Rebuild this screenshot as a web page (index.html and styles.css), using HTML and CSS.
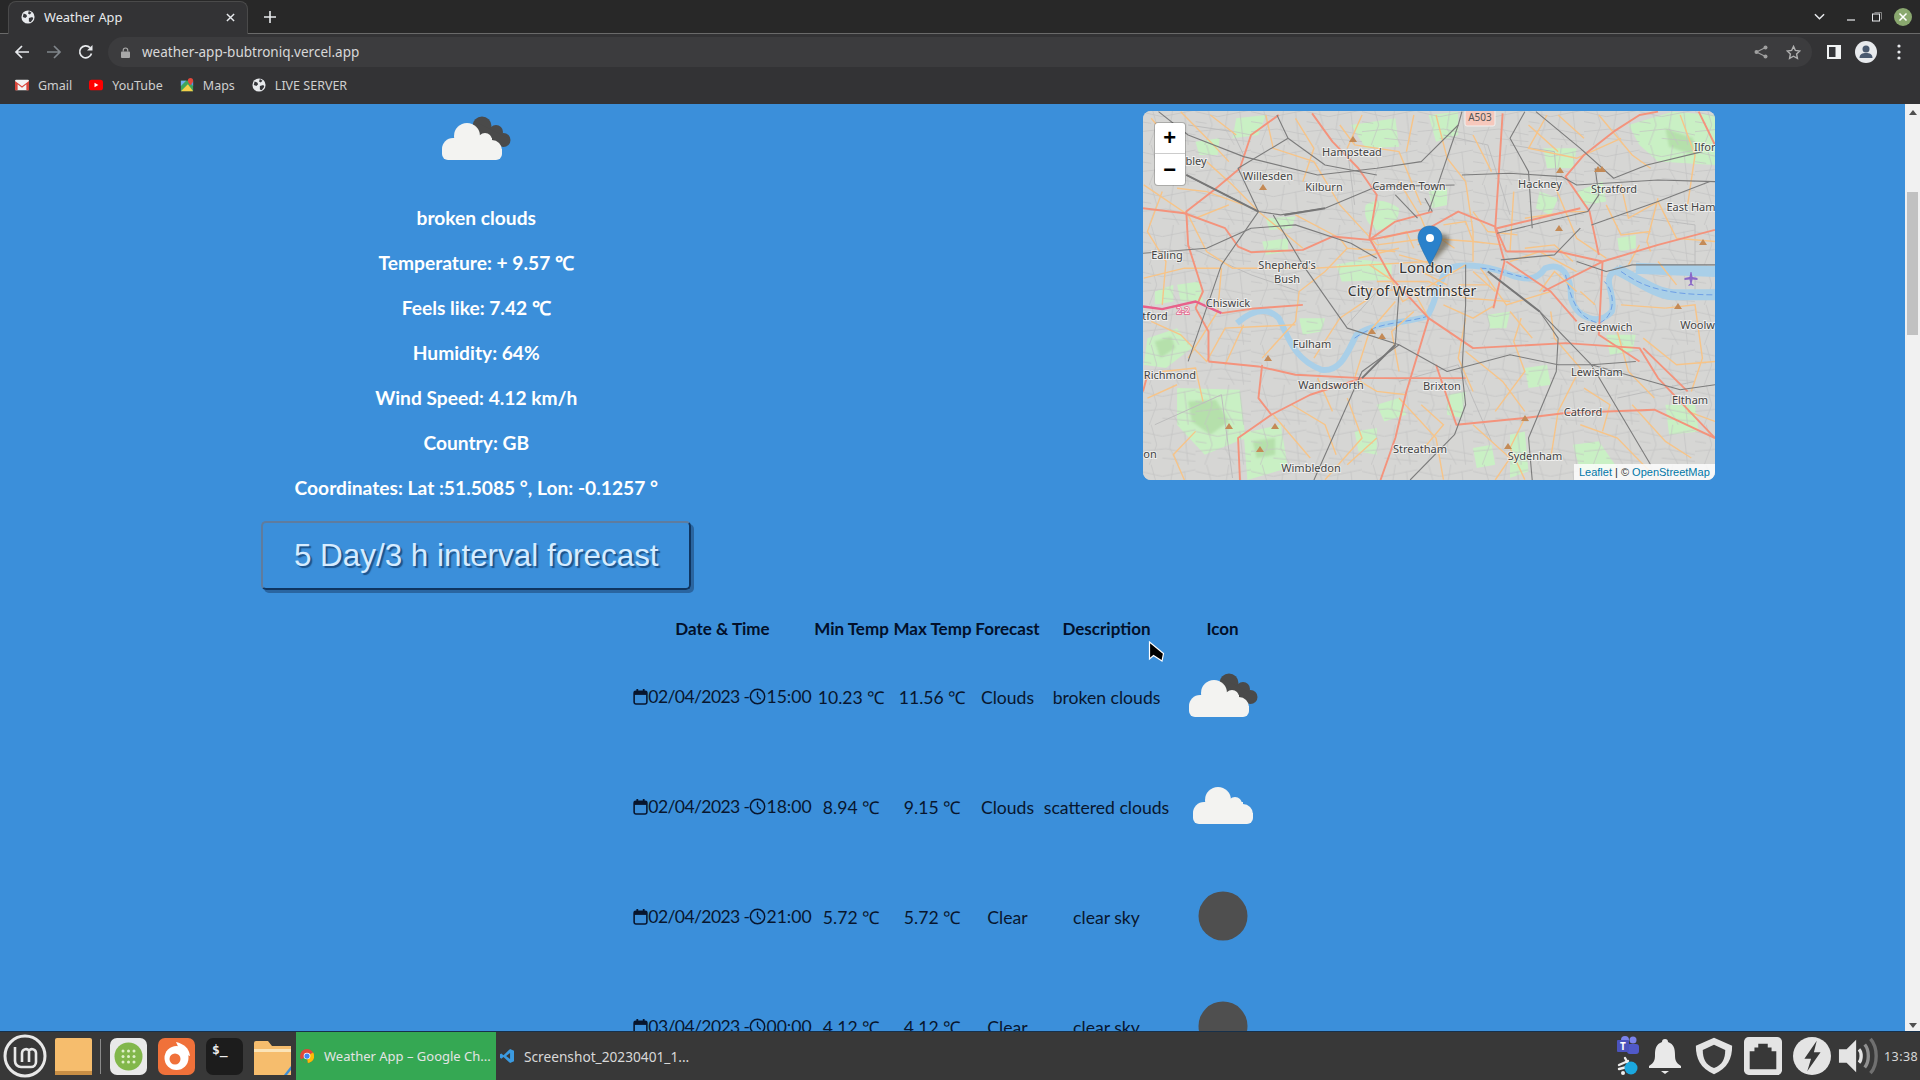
FILE: index.html
```html
<!DOCTYPE html>
<html lang="en">
<head>
<meta charset="utf-8">
<title>Weather App</title>
<link rel="stylesheet" href="styles.css">
</head>
<body>
<header class="chrome">
  <div class="tabstrip">
    <div class="tab">
      <svg class="ico14" viewBox="0 0 16 16"><circle cx="8" cy="8" r="7.500" fill="#e8eaed"/><path d="M3 4l3 1 1 2-2 2-3-1zM9 1l3 2-2 2-2-1zM9 9l4-1 1 2-3 4-2-1z" fill="#35363a"/></svg>
      <span class="tab-title">Weather App</span>
      <svg class="tab-x" viewBox="0 0 10 10"><path d="M1 1l8 8M9 1l-8 8" stroke="#e8eaed" stroke-width="1.600"/></svg>
    </div>
    <svg class="newtab" viewBox="0 0 12 12"><path d="M6 0v12M0 6h12" stroke="#e8eaed" stroke-width="1.600"/></svg>
    <div class="winctl">
      <svg class="w-chev" viewBox="0 0 12 8"><path d="M1 1l5 5 5-5" fill="none" stroke="#e8eaed" stroke-width="1.600"/></svg>
      <svg class="w-min" viewBox="0 0 10 10"><path d="M1 8h8" stroke="#e8eaed" stroke-width="1.200"/></svg>
      <svg class="w-res" viewBox="0 0 10 10"><rect x="0.500" y="2" width="7" height="7" fill="none" stroke="#e8eaed"/><path d="M2.500 .5h7v7" fill="none" stroke="#999" stroke-width=".8"/></svg>
      <svg class="w-close" viewBox="0 0 18 18"><circle cx="9" cy="9" r="9" fill="#8aa86f"/><path d="M5.500 5.500l7 7M12.500 5.500l-7 7" stroke="#fff" stroke-width="1.500"/></svg>
    </div>
  </div>
  <div class="toolbar">
    <svg class="nav" viewBox="0 0 16 16"><path d="M15 8H2M8 2L2 8l6 6" fill="none" stroke="#e8eaed" stroke-width="1.700"/></svg>
    <svg class="nav" viewBox="0 0 16 16"><path d="M1 8h13M8 2l6 6-6 6" fill="none" stroke="#80868b" stroke-width="1.700"/></svg>
    <svg class="nav" viewBox="0 0 16 16"><path d="M13.500 9.500A6 6 0 1 1 12 3.600" fill="none" stroke="#e8eaed" stroke-width="1.700"/><path d="M14.500 1v5.500H9z" fill="#e8eaed"/></svg>
    <div class="omnibox">
      <svg class="lock" viewBox="0 0 10 12"><rect y="5" width="10" height="7" rx="1" fill="#a8a8a8"/><path d="M2.500 5V3.500a2.500 2.500 0 0 1 5 0V5" fill="none" stroke="#a8a8a8" stroke-width="1.300"/></svg>
      <span class="url">weather-app-bubtroniq.vercel.app</span>
      <svg class="omni-act" viewBox="0 0 14 14"><circle cx="11.500" cy="2.500" r="2" fill="#a0a0a0"/><circle cx="11.500" cy="11.500" r="2" fill="#a0a0a0"/><circle cx="2.500" cy="7" r="2" fill="#a0a0a0"/><path d="M11.500 2.500L2.500 7l9 4.500" fill="none" stroke="#a0a0a0" stroke-width="1.200"/></svg>
      <svg class="omni-star" viewBox="0 0 16 16"><path d="M8 1.500l2 4.300 4.700.6-3.400 3.200.9 4.700L8 12l-4.200 2.300.9-4.700L1.300 6.400 6 5.800z" fill="none" stroke="#b0b0b0" stroke-width="1.500"/></svg>
    </div>
    <svg class="panel" viewBox="0 0 14 14"><rect width="14" height="14" fill="#f1f3f4"/><rect x="2" y="2" width="6.500" height="10" fill="#35363a"/></svg>
    <svg class="avatar" viewBox="0 0 22 22"><circle cx="11" cy="11" r="11" fill="#e8eaed"/><circle cx="11" cy="8" r="3.500" fill="#4a5a70"/><path d="M4.500 17c0-4 3-5 6.500-5s6.500 1 6.500 5z" fill="#4a5a70"/></svg>
    <svg class="dots" viewBox="0 0 4 16"><circle cx="2" cy="2" r="1.600" fill="#e8eaed"/><circle cx="2" cy="8" r="1.600" fill="#e8eaed"/><circle cx="2" cy="14" r="1.600" fill="#e8eaed"/></svg>
  </div>
  <nav class="bookmarks">
    <span class="bm"><svg class="ico14" viewBox="0 0 16 12"><rect width="16" height="12" rx="1.500" fill="#f2f2f2"/><path d="M0 1.500l8 6 8-6V12h-3V5L8 9 3 5v7H0z" fill="#d8453a"/></svg>Gmail</span>
    <span class="bm"><svg class="ico14" viewBox="0 0 16 12"><rect width="16" height="12" rx="3" fill="#f00"/><path d="M6.300 3.500L10.700 6l-4.400 2.500z" fill="#fff"/></svg>YouTube</span>
    <span class="bm"><svg class="ico14" viewBox="0 0 16 16"><path d="M1 3h14v12H1z" fill="#3fa55b"/><path d="M1 15L9 7l6 8z" fill="#f5d04a"/><path d="M9 3h6v6z" fill="#5c8fe8"/><path d="M1 9l6-6H1z" fill="#6fb0f0"/><path d="M12 0a3 3 0 0 1 3 3c0 2-3 5-3 5S9 5 9 3a3 3 0 0 1 3-3z" fill="#e0483b"/></svg>Maps</span>
    <span class="bm"><svg class="ico14" viewBox="0 0 16 16"><circle cx="8" cy="8" r="7.500" fill="#e8eaed"/><path d="M3 4l3 1 1 2-2 2-3-1zM9 1l3 2-2 2-2-1zM9 9l4-1 1 2-3 4-2-1z" fill="#35363a"/></svg>LIVE SERVER</span>
  </nav>
</header>

<div class="viewport">
  <main class="page">
    <section class="top">
      <div class="current">
        <svg class="wicon wicon-top" viewBox="0 0 100 100"><use href="#broken"/></svg>
        <p>broken clouds</p>
        <p>Temperature: + 9.57 ℃</p>
        <p>Feels like: 7.42 ℃</p>
        <p>Humidity: 64%</p>
        <p>Wind Speed: 4.12 km/h</p>
        <p>Country: GB</p>
        <p>Coordinates: Lat :51.5085 °, Lon: -0.1257 °</p>
        <button class="forecast-btn" type="button">5 Day/3 h interval forecast</button>
      </div>
      <div class="map-col">
        <div class="map">
          <svg class="map-base" viewBox="8 18 1546 1108" preserveAspectRatio="none">
            <defs>
              <pattern id="streets" width="150" height="120" patternUnits="userSpaceOnUse">
                <path d="M0 20L60 35L150 15M30 0L45 60L25 120M90 0L80 70L105 120M0 80L70 72L150 90M120 20L130 120M0 50L30 55M60 100L150 110" fill="none" stroke="#c2c2c2" stroke-width=".7" vector-effect="non-scaling-stroke"/>
              </pattern>
            </defs>
            <rect x="0" y="0" width="1600" height="1200" fill="#d6d6d4"/>
            <g class="parks">
              <path d="M570 60L690 40L700 125L610 130Z"/>
              <path d="M610 300Q650 270 700 310Q700 370 640 375Q600 350 610 300Z"/>
              <path d="M530 480L600 465L680 475L680 525L545 530Z"/>
              <path d="M100 850L270 855L285 1000L175 1050L100 960Z"/>
              <path d="M280 985L380 960L400 1090L290 1126Z"/>
              <path d="M20 700L100 670L140 730L70 790L10 780Z"/>
              <path d="M1320 60L1440 20L1554 30L1554 180L1400 170L1350 120Z"/>
              <path d="M1040 790L1100 780L1110 840L1050 850Z"/>
              <path d="M1000 990L1040 980L1050 1100L1000 1120Z"/>
              <path d="M830 870L880 860L870 940L830 930Z"/>
              <path d="M1180 260L1250 230L1260 290L1200 300Z"/>
              <path d="M940 630L1000 620L990 670L945 670Z"/>
              <path d="M1170 1020L1240 1010L1290 1090L1190 1100Z"/>
              <path d="M260 40L340 30L320 90L250 100Z"/>
              <path d="M340 340L420 335L410 370L350 375Z"/>
              <path d="M150 110L215 100L210 150L160 150Z"/>
              <path d="M100 540L160 530L170 590L110 590Z"/>
              <path d="M640 900L700 880L720 930L660 950Z"/>
              <path d="M1420 900L1500 900L1510 980L1430 990Z"/>
              <path d="M780 30L860 20L860 90L800 110Z"/>
              <path d="M1090 130L1180 130L1170 190L1100 190Z"/>
              <path d="M1080 260L1130 280L1110 330L1070 310Z"/>
              <path d="M1290 400L1340 390L1340 430L1295 440Z"/>
              <path d="M1260 690L1340 690L1330 740L1270 750Z"/>
              <path d="M40 560L90 540L90 590L40 600Z"/>
              <path d="M580 980L640 970L640 1050L590 1040Z"/>
              <path d="M430 640L500 640L490 680L440 690Z"/>
              <path d="M780 260L830 250L830 300L790 310Z"/>
              <path d="M900 1030L950 1020L960 1080L910 1090Z"/>
              <path d="M330 410L400 400L400 440L340 450Z"/>
            </g>
            <g class="forest">
              <path d="M130 890L205 885L240 950L190 990L140 950Z"/>
              <path d="M40 710L85 695L95 730L55 760Z"/>
              <path d="M305 1010L365 1000L365 1050L315 1060Z"/>
              <path d="M1420 70L1495 100L1495 150L1430 125Z"/>
            </g>
            <rect x="0" y="0" width="1600" height="1200" fill="url(#streets)"/>
            <g class="minor">
              <path d="M130 60L250 80L280 150M120 420L300 510L430 560M560 130L580 300M640 560L560 660M1000 120L1120 140L1130 290M1300 330L1500 360L1500 560M820 90L940 120L1000 330M700 830L860 780L950 1010M1290 880L1500 830M40 960L220 870L250 1120"/>
            </g>
            <g class="thames">
              <path d="M262 655Q330 590 375 640C400 690 410 760 490 795C545 805 565 730 585 690C640 650 720 655 775 635C800 600 805 520 835 490C880 470 960 490 1000 510C1040 525 1070 530 1095 490C1140 470 1165 510 1165 580C1180 640 1240 665 1275 620C1290 570 1240 520 1290 495C1340 520 1390 565 1440 570L1554 570"/>
            </g>
            <path class="thames-wide" d="M1290 495C1340 520 1390 565 1440 570L1554 570M1340 490L1554 500"/>
            <path class="thames-dash" d="M580 700C640 650 720 655 775 635M920 490C960 490 1000 510 1050 520M1150 510C1165 580 1180 640 1240 655C1280 640 1290 570 1255 530M1300 500C1340 530 1390 570 1554 570"/>
            <g class="secondary">
              <path d="M10 240L130 330L180 440L250 490L470 490L620 480L780 470M100 250L180 260L280 300M340 30L360 130L470 170L540 300L640 420M540 60L580 120L700 140L760 300M110 20L190 110L240 170M180 170L250 240L320 320L440 430M420 330L540 400L560 430L690 440"/>
              <path d="M620 480L680 525L710 590L880 480M560 430L500 500L430 560L420 650L330 760M640 530L780 530L880 580L1000 590M690 590L620 680L580 820L640 860L720 870M220 490L210 620L130 760M30 650L110 690L180 770L230 670L420 660"/>
              <path d="M880 230L900 380L900 470M700 230L760 340L800 450M900 90L950 200M1100 30L1050 130L1180 160L1300 100M1120 240L1180 400L1260 460M1010 260L1000 440M1040 340L1160 320L1210 320M1300 240L1320 340L1400 290L1450 400L1554 410M1400 280L1370 410L1380 440"/>
              <path d="M1030 640L1010 710L1040 800L960 920M1110 620L1120 700L1190 790L1130 920L1110 1060M880 740L980 830L1040 920M1290 680L1320 800L1390 880M1360 700L1450 780L1554 770M1420 610L1500 600L1520 760L1490 860M1040 940L1000 1030L1040 1125M700 880L800 1000L820 1125M560 880L600 1000L500 1125M360 930L460 1060M1190 960L1290 1000L1400 1125"/>
              <path d="M880 640L860 760L900 860M780 640L740 560L590 550M920 490L990 600L1110 560M1000 470L1080 440L1180 500M640 420L780 400L900 410L980 420M700 450L800 480"/>
              <path d="M10 520L120 490L220 490M60 260L20 380L70 470L60 600M150 340L240 300M30 40L100 130L60 200M190 30L260 90M420 40L470 130L440 230M600 30L560 130M740 30L720 140M800 30L830 160L880 230M1130 30L1200 100M1240 30L1330 150L1380 190M1460 30L1500 150L1480 300M1050 60L1130 140"/>
              <path d="M620 580L540 640L470 760M740 620L680 680L700 800M820 600L900 640L960 600M1000 620L1060 700M1190 560L1230 600M1300 600L1420 610M1400 470L1450 540M1320 480L1350 420M1080 560L1120 500L1180 560M900 500L960 560"/>
              <path d="M60 800L150 790L170 890M150 980L90 1050L120 1126M410 900L500 960L530 1050M640 1000L560 1080M760 900L820 960L760 1040M900 960L1000 1060L960 1126M1200 850L1270 900L1250 980M1330 900L1420 1010L1490 1060M1480 920L1554 950M20 880L100 840M230 780L280 660M480 820L520 920"/>
              <path d="M660 400L720 380L740 430M750 420L810 400L850 430M820 360L880 350L900 410M900 320L940 380L1020 390M760 500L830 540M860 540L940 540M590 460L700 430M1040 430L1120 420L1170 470M1260 300L1300 390L1380 380"/>
            </g>
            <g class="major">
              <path d="M375 30L300 90L270 190L200 255L125 320L130 420L170 560L150 610"/>
              <path d="M8 310L120 325L230 370L265 425L300 442L440 435L520 395L620 405L780 370L860 320L960 365L990 440"/>
              <path d="M220 625L300 612L440 600"/>
              <path d="M465 25L520 110L590 190L640 270L620 400L680 520L780 640"/>
              <path d="M990 440L1130 440L1250 470L1400 420L1554 375"/>
              <path d="M1240 450L1215 320L1150 215L1200 150L1280 80L1350 30L1400 20"/>
              <path d="M980 25L970 200L960 370L985 470L955 610"/>
              <path d="M780 640L860 700L900 730L1150 715L1350 730L1400 820L1554 1000"/>
              <path d="M185 770L320 785L420 810L600 820L880 820"/>
              <path d="M330 780L320 880L355 930L265 1000L270 1126"/>
              <path d="M355 930L460 870L600 820"/>
              <path d="M780 640L720 860L690 1000L650 1126"/>
              <path d="M800 780L855 960L1040 940L1150 925L1390 915L1554 1000"/>
              <path d="M990 470L1110 560L1180 650"/>
              <path d="M620 405L690 350L790 320M965 370L1190 310M1090 560L1250 470M1360 730L1480 860M1250 470L1240 690L1350 770"/>
              <path d="M20 810L8 860M185 770L185 680L150 610M1510 20L1554 120"/>
            </g>
            <path class="pink" d="M8 605L60 613L150 590L220 625"/>
            <g class="rail">
              <path d="M50 20L130 90L280 155L480 210L640 190L760 170L860 60L870 20"/>
              <path d="M125 210L320 320L380 330L500 310L640 245L850 240"/>
              <path d="M320 320L265 190L400 100L370 30"/>
              <path d="M400 100L500 180L640 210"/>
              <path d="M8 445L180 430L300 370L420 360L570 415"/>
              <path d="M320 320L220 480L130 770"/>
              <path d="M360 330L440 480L560 670L700 720L830 800L1000 750L1130 780L1220 780L1340 770"/>
              <path d="M700 720L600 800L470 1126"/>
              <path d="M860 60L780 320"/>
              <path d="M1070 20L1190 130L1280 220L1370 180L1520 140"/>
              <path d="M870 210L1000 205L1140 215L1180 240L1400 225L1554 230"/>
              <path d="M965 385L1210 320L1240 270L1230 190"/>
              <path d="M1220 360L1400 290L1540 230"/>
              <path d="M975 465L1120 450L1190 370"/>
              <path d="M940 500L1080 620L1130 700L1125 800L1050 1000L1060 1126"/>
              <path d="M1080 620L1220 780L1380 1080"/>
              <path d="M1040 20L1000 100L1050 200L1060 370"/>
              <path d="M880 480L880 600L870 800L880 900L850 990L730 1126"/>
              <path d="M1220 780L1460 855L1554 840"/>
              <path d="M1180 470L1260 500L1330 480L1554 480"/>
              <path d="M700 560L690 720"/>
              <path d="M690 270L750 340M770 280L790 320"/>
              <path d="M570 415L640 460"/>
            </g>
            <g class="rail-heavy">
              <path d="M125 210L320 320"/>
              <path d="M600 820L690 720"/>
              <path d="M940 500L1080 620"/>
              <path d="M390 330L500 310"/>
            </g>
          </svg>
          <svg class="map-labels" viewBox="0 0 572 369">
            <g class="peaks">
              <path d="M206 31l4-6 4 6zM116 79l4-6 4 6zM413 62l4-6 4 6zM451 61l4-6 4 6zM455 61l4-6 4 6zM412 120l4-6 4 6zM556 134l4-6 4 6zM531 198l4-6 4 6zM225 223l4-6 4 6zM235 228l4-6 4 6zM121 250l4-6 4 6zM378 310l4-6 4 6zM361 338l4-6 4 6zM82 318l4-6 4 6zM128 318l4-6 4 6zM113 341l4-6 4 6z"/>
            </g>
            <path class="plane" d="M547 161l1.500 0 1 5 5 1v2l-5-.5-.8 4 1.800 1.500v1l-2.500-1-2.500 1v-1l1.800-1.500-.8-4-5 .5v-2l5-1 1-5z"/>
            <g class="lbl">
              <text x="209" y="45">Hampstead</text>
              <text x="125" y="69">Willesden</text>
              <text x="181" y="80">Kilburn</text>
              <text x="266" y="79">Camden Town</text>
              <text x="397" y="77">Hackney</text>
              <text x="471" y="82">Stratford</text>
              <text x="548" y="100">East Ham</text>
              <text x="565" y="40">Ilford</text>
              <text x="53" y="54">bley</text>
              <text x="24" y="148">Ealing</text>
              <text x="144" y="158">Shepherd's</text>
              <text x="144" y="172">Bush</text>
              <text x="85" y="196">Chiswick</text>
              <text x="12" y="209">tford</text>
              <text x="169" y="237">Fulham</text>
              <text x="462" y="220">Greenwich</text>
              <text x="556" y="218">Woolwi</text>
              <text x="27" y="268">Richmond</text>
              <text x="188" y="278">Wandsworth</text>
              <text x="299" y="279">Brixton</text>
              <text x="454" y="265">Lewisham</text>
              <text x="547" y="293">Eltham</text>
              <text x="440" y="305">Catford</text>
              <text x="277" y="342">Streatham</text>
              <text x="392" y="349">Sydenham</text>
              <text x="168" y="361">Wimbledon</text>
              <text x="7" y="347">on</text>
            </g>
            <g class="lbl lbl-big">
              <text x="283" y="162">London</text>
              <text x="269" y="185">City of Westminster</text>
            </g>
            <text class="m4" x="40" y="203">2-2</text>
            <g class="a503"><rect x="322" y="-2" width="30" height="17" rx="2"/><text x="337" y="10">A503</text></g>
            <path class="pin-shadow" d="M288 153L306 134Q309 125 300 123L293 123Z"/>
            <path class="pin" d="M287 115C279 115 275 121 275 127C275 132 285 150 287 154C289 150 299 132 299 127C299 121 295 115 287 115Z"/>
            <circle class="pin-dot" cx="287" cy="127" r="4"/>
          </svg>
          <div class="zoomctl"><span class="zbtn">+</span><span class="zbtn">−</span></div>
          <div class="attrib"><a>Leaflet</a> | © <a>OpenStreetMap</a></div>
        </div>
      </div>
    </section>
    <table class="forecast">
      <colgroup><col class="c1"><col class="c2"><col class="c3"><col class="c4"><col class="c5"><col class="c6"></colgroup>
      <thead>
        <tr><th>Date &amp; Time</th><th>Min Temp</th><th>Max Temp</th><th>Forecast</th><th>Description</th><th>Icon</th></tr>
      </thead>
      <tbody>
        <tr>
          <td><span class="dt"><svg class="fa" viewBox="0 0 14 16"><use href="#cal"/></svg><span class="dt-date">02/04/2023 -</span><svg class="fa fa-clock" viewBox="0 0 16 16"><use href="#clock"/></svg>15:00</span></td>
          <td>10.23 ℃</td><td>11.56 ℃</td><td>Clouds</td><td>broken clouds</td>
          <td><svg class="wicon" viewBox="0 0 100 100"><use href="#broken"/></svg></td>
        </tr>
        <tr>
          <td><span class="dt"><svg class="fa" viewBox="0 0 14 16"><use href="#cal"/></svg><span class="dt-date">02/04/2023 -</span><svg class="fa fa-clock" viewBox="0 0 16 16"><use href="#clock"/></svg>18:00</span></td>
          <td>8.94 ℃</td><td>9.15 ℃</td><td>Clouds</td><td>scattered clouds</td>
          <td><svg class="wicon" viewBox="0 0 100 100"><use href="#scattered"/></svg></td>
        </tr>
        <tr>
          <td><span class="dt"><svg class="fa" viewBox="0 0 14 16"><use href="#cal"/></svg><span class="dt-date">02/04/2023 -</span><svg class="fa fa-clock" viewBox="0 0 16 16"><use href="#clock"/></svg>21:00</span></td>
          <td>5.72 ℃</td><td>5.72 ℃</td><td>Clear</td><td>clear sky</td>
          <td><svg class="wicon" viewBox="0 0 100 100"><circle cx="50" cy="51" r="24.500" fill="#4f4f4f"/></svg></td>
        </tr>
        <tr>
          <td><span class="dt"><svg class="fa" viewBox="0 0 14 16"><use href="#cal"/></svg><span class="dt-date">03/04/2023 -</span><svg class="fa fa-clock" viewBox="0 0 16 16"><use href="#clock"/></svg>00:00</span></td>
          <td>4.12 ℃</td><td>4.12 ℃</td><td>Clear</td><td>clear sky</td>
          <td><svg class="wicon" viewBox="0 0 100 100"><circle cx="50" cy="51" r="24.500" fill="#4f4f4f"/></svg></td>
        </tr>
      </tbody>
    </table>
  </main>
  <div class="scrollbar">
    <span class="sb-up"></span>
    <span class="sb-thumb"></span>
    <span class="sb-down"></span>
  </div>
  <svg class="cursor" viewBox="0 0 17 22"><path d="M1.500 1L1.500 18L5.500 14.500L14 20L15.500 12.500Z" fill="#000" stroke="#fff" stroke-width="1.200"/></svg>
</div>

<footer class="taskbar">
  <svg class="tb-mint" viewBox="0 0 44 44"><circle cx="22" cy="22" r="20" fill="none" stroke="#e8e8e8" stroke-width="3"/><path d="M12 13v14a6 6 0 0 0 6 6h10a5 5 0 0 0 5-5V19a4 4 0 0 0-7-2.500A4 4 0 0 0 19 19v9M26 17v11" fill="none" stroke="#e8e8e8" stroke-width="2.600"/></svg>
  <svg class="tb-app tb-first" viewBox="0 0 37 37"><rect y="0" width="37" height="37" rx="2" fill="#f6bd6d"/><rect y="33" width="37" height="4" fill="#c98f45"/></svg>
  <span class="tb-sep"></span>
  <svg class="tb-app tb-aftersep" viewBox="0 0 37 37"><rect width="37" height="37" rx="7" fill="#e9e9e9"/><circle cx="18.500" cy="18.500" r="14" fill="#82b74b"/><g fill="#dff0c8"><circle cx="13" cy="13" r="1.500"/><circle cx="18.500" cy="13" r="1.500"/><circle cx="24" cy="13" r="1.500"/><circle cx="13" cy="18.500" r="1.500"/><circle cx="18.500" cy="18.500" r="1.500"/><circle cx="24" cy="18.500" r="1.500"/><circle cx="13" cy="24" r="1.500"/><circle cx="18.500" cy="24" r="1.500"/><circle cx="24" cy="24" r="1.500"/></g></svg>
  <svg class="tb-app" viewBox="0 0 37 37"><rect width="37" height="37" rx="7" fill="#f0713a"/><circle cx="18.500" cy="20" r="12" fill="#fff"/><circle cx="17" cy="21" r="5.500" fill="#f0713a"/><path d="M18 4c8 2 13 6 14 14l-9-3z" fill="#fff"/></svg>
  <svg class="tb-app" viewBox="0 0 37 37"><rect width="37" height="37" rx="7" fill="#1c1c1c"/><text class="tb-term" x="6" y="16">$_</text></svg>
  <svg class="tb-app" viewBox="0 0 37 37"><path d="M0 5a2 2 0 0 1 2-2h12l4 5h19v29H0z" fill="#f6bd6d"/><rect y="11" width="37" height="3" fill="#fbe4b8"/><path d="M30 37l7-9v4l-4 5z" fill="#3f8fd8"/></svg>
  <div class="tb-task tb-active">
    <svg class="ico14" viewBox="0 0 16 16"><circle cx="8" cy="8" r="8" fill="#e0483b"/><path d="M8 8L1 12a8 8 0 0 0 8 4z" fill="#34a853"/><path d="M8 8l7-4a8 8 0 0 1-6 12z" fill="#fbbc04"/><circle cx="8" cy="8" r="3.800" fill="#fff"/><circle cx="8" cy="8" r="3" fill="#4285f4"/></svg>
    <span>Weather App – Google Ch...</span>
  </div>
  <div class="tb-task tb-other">
    <svg class="ico14" viewBox="0 0 16 16"><path d="M11.500 0L16 2v12l-4.500 2L4 9l-2.500 2L0 10V6l1.500-1L4 7zM11.500 4.500L7 8l4.500 3.500z" fill="#3b9ae0"/></svg>
    <span>Screenshot_20230401_1...</span>
  </div>
  <div class="tray">
    <div class="tray-stack">
      <svg class="tray-s" viewBox="0 0 24 20"><circle cx="17" cy="4" r="3.500" fill="#7b83eb"/><rect x="11" y="8" width="12" height="10" rx="3" fill="#5059c9"/><circle cx="9" cy="4" r="4" fill="#7b83eb"/><rect x="1" y="4" width="12" height="12" rx="1" fill="#4b53bc"/><text class="tb-t" x="7" y="13.500">T</text></svg>
      <svg class="tray-s" viewBox="0 0 24 20"><path d="M3 9l9-4M3 13l8-2M9 2l4 7" stroke="#eee" stroke-width="2.400" stroke-linecap="round"/><circle cx="15" cy="12" r="6.500" fill="#1ba8df"/><circle cx="7" cy="17" r="2" fill="#eee"/></svg>
    </div>
    <svg class="tray-i" viewBox="0 0 34 38"><path d="M17 2a3 3 0 0 1 3 3c6 2 7 7 7 13 0 5 1 8 6 11v2H1v-2c5-3 6-6 6-11 0-6 1-11 7-13a3 3 0 0 1 3-3z" fill="#e9e9e9"/><path d="M13 34h8l-4 3z" fill="#e9e9e9"/></svg>
    <svg class="tray-i" viewBox="0 0 44 44"><path d="M22 1l21 9c0 15-5 26-21 33C6 36 1 25 1 10z" fill="#e4e4e4"/><path d="M22 9l13 6c0 10-3 17-13 21C12 32 9 25 9 15z" fill="#3b3b3b"/></svg>
    <svg class="tray-i" viewBox="0 0 40 40"><rect width="40" height="40" rx="5" fill="#e4e4e4"/><path d="M6 15h5v-4h4V7h10v4h4v4h5v19H6z" fill="#383838"/></svg>
    <svg class="tray-i tray-bolt" viewBox="0 0 40 40"><circle cx="20" cy="20" r="20" fill="#e4e4e4"/><path d="M25 4L12 23h7l-4 13 14-20h-7z" fill="#383838"/></svg>
    <svg class="tray-v" viewBox="0 0 44 38"><path d="M1 12h8L19 2v34L9 26H1z" fill="#e4e4e4"/><path d="M22 12c3 3 3 11 0 14" fill="none" stroke="#e4e4e4" stroke-width="3.500"/><path d="M28 7c5 6 5 18 0 24" fill="none" stroke="#909090" stroke-width="3.500"/><path d="M34 1c8 9 8 27 0 36" fill="none" stroke="#707070" stroke-width="3.500"/></svg>
    <span class="clock">13:38</span>
  </div>
</footer>

<svg class="defs" width="0" height="0" aria-hidden="true">
  <defs>
    <g id="broken">
      <g fill="#4a4a4a"><circle cx="56" cy="38" r="9.500"/><circle cx="70" cy="44" r="7"/><circle cx="77.500" cy="52" r="7"/><path d="M50 34L82 50L70 62L55 50Z"/></g>
      <g fill="#f3f3f1"><circle cx="41" cy="48" r="13"/><circle cx="59" cy="52" r="7"/><circle cx="27" cy="61" r="11"/><circle cx="66" cy="62" r="10"/><path d="M27 50h39v22H27z"/><path d="M16 61h60v5a6 6 0 0 1-6 6H22a6 6 0 0 1-6-6z"/></g>
    </g>
    <g id="scattered">
      <g fill="#f3f3f1"><circle cx="45" cy="45" r="13"/><circle cx="62" cy="49" r="7"/><circle cx="31" cy="58" r="11"/><circle cx="70" cy="59" r="10"/><path d="M31 47h39v22H31z"/><path d="M20 58h60v5a6 6 0 0 1-6 6H26a6 6 0 0 1-6-6z"/></g>
    </g>
    <g id="cal"><rect x="1" y="3" width="12" height="12" rx="1.500" fill="none" stroke="#08162e" stroke-width="1.500"/><path d="M1 3h12v3.500H1z" fill="#08162e"/><path d="M4 1v3M10 1v3" stroke="#08162e" stroke-width="1.700"/></g>
    <g id="clock"><circle cx="8" cy="8" r="6.800" fill="none" stroke="#08162e" stroke-width="1.400"/><path d="M8 3.500V8l3 2.500" fill="none" stroke="#08162e" stroke-width="1.300"/></g>
  </defs>
</svg>
</body>
</html>
```

FILE: styles.css
```css
* { box-sizing: border-box; }
html, body { margin: 0; height: 100%; overflow: hidden; }
body {
  display: flex;
  flex-direction: column;
  height: 1080px;
  background: #3b8fda;
  font-family: "Noto Sans", sans-serif;
}
.defs { position: absolute; }

/* browser chrome */
.chrome { flex: 0 0 104px; background: #333335; color: #e8eaed; }
.tabstrip {
  height: 34px;
  display: flex;
  align-items: flex-end;
  padding-left: 8px;
  background: #282828;
  border-bottom: 1px solid #6a6a6a;
}
.tab {
  width: 240px;
  height: 33px;
  display: flex;
  align-items: center;
  padding: 0 12px 2px 12px;
  margin-bottom: -1px;
  background: #333335;
  border-radius: 8px 8px 0 0;
  border: 1px solid #4a4a4a;
  border-bottom: 0;
}
.ico14 { width: 14px; height: 14px; flex: none; }
.tab-title { margin-left: 9px; font-size: 12.8px; flex: 1; }
.tab-x { width: 9px; height: 9px; }
.newtab { width: 12px; height: 12px; margin: 0 0 10px 16px; }
.winctl { margin-left: auto; align-self: center; display: flex; align-items: center; padding-right: 8px; }
.w-chev { width: 11px; height: 8px; margin-right: 21px; }
.w-min { width: 10px; height: 10px; margin-right: 16px; }
.w-res { width: 10px; height: 10px; margin-right: 12px; }
.w-close { width: 18px; height: 18px; }
.toolbar { height: 36px; display: flex; align-items: center; padding: 0 19px 0 14px; }
.nav { width: 16px; height: 16px; margin-right: 16px; }
.nav:nth-of-type(3) { margin-right: 14px; }
.omnibox {
  flex: 1;
  height: 30px;
  display: flex;
  align-items: center;
  margin-right: 15px;
  padding: 0 11px 0 13px;
  background: #3c3c3e;
  border-radius: 15px;
}
.lock { width: 9px; height: 11px; }
.url { margin-left: 12px; flex: 1; font-size: 13.5px; color: #d8d8d8; }
.omni-act { width: 14px; height: 14px; margin-right: 18px; }
.omni-star { width: 15px; height: 15px; }
.panel { width: 14px; height: 14px; margin-right: 14px; }
.avatar { width: 22px; height: 22px; margin-right: 20px; }
.dots { width: 4px; height: 16px; }
.bookmarks { height: 34px; display: flex; align-items: center; gap: 17px; padding: 0 0 4px 15px; font-size: 12.5px; color: #cfcfcf; }
.bm { display: flex; align-items: center; gap: 9px; }

/* page area */
.viewport { flex: 1; min-height: 0; display: flex; position: relative; }
.page { flex: 1; min-width: 0; overflow: hidden; }
.top { display: grid; grid-template-columns: 1fr 1fr; }
.current { display: flex; flex-direction: column; align-items: center; color: #fff; }
.wicon { width: 100px; height: 100px; display: block; margin: 0 auto; }
.wicon-top { margin-top: -16px; }
.current p { margin: 17px 0 2px; font-size: 19.2px; line-height: 26px; font-weight: 700; font-family: Lato, sans-serif; }
.forecast-btn {
  width: 430px;
  height: 69px;
  margin-top: 18px;
  padding: 0;
  background: transparent;
  border: 2px solid #5f7c9e;
  border-right-color: #0f3560;
  border-bottom-color: #0f3560;
  border-radius: 5px;
  box-shadow: 3px 3px 0 #2a65a0;
  font-family: "Liberation Sans", Arial, sans-serif;
  font-size: 31.4px;
  color: #d6ecff;
  text-shadow: 2px 2px 1px #1d5289;
}
.map-col { display: flex; justify-content: center; align-items: flex-start; padding-top: 7px; }
.map {
  position: relative;
  width: 572px;
  height: 369px;
  overflow: hidden;
  border-radius: 8px;
  background: #d6d6d4;
}
.map-base, .map-labels { position: absolute; left: 0; top: 0; width: 572px; height: 369px; }
.map-base { filter: blur(.4px); }
.parks { fill: #c9f0c4; filter: blur(2px); }
.forest { fill: #b5e0ab; filter: blur(3px); }
.minor path { fill: none; stroke: #bdbdbd; stroke-width: 1; vector-effect: non-scaling-stroke; }
.thames path { fill: none; stroke: #a9cfe8; stroke-width: 6px; vector-effect: non-scaling-stroke; }
.thames-wide { fill: none; stroke: #a9cfe8; stroke-width: 11px; vector-effect: non-scaling-stroke; }
.thames-dash { fill: none; stroke: #6e9fe6; stroke-width: 1px; stroke-dasharray: 6 3; vector-effect: non-scaling-stroke; }
.secondary path { fill: none; stroke: #f7c488; stroke-width: 1.4px; vector-effect: non-scaling-stroke; }
.major path { fill: none; stroke: #f4937c; stroke-width: 1.9px; stroke-linejoin: round; vector-effect: non-scaling-stroke; }
.pink { fill: none; stroke: #e8608a; stroke-width: 2.4px; vector-effect: non-scaling-stroke; }
.rail path { fill: none; stroke: #7c7c7c; stroke-width: 1.1px; stroke-linejoin: round; vector-effect: non-scaling-stroke; }
.rail-heavy path { fill: none; stroke: #777; stroke-width: 2px; vector-effect: non-scaling-stroke; }
.peaks { fill: #c48a56; }
.plane { fill: #8a68c8; }
.lbl text {
  font-size: 11px;
  fill: #444;
  text-anchor: middle;
  stroke: rgba(255, 255, 255, .6);
  stroke-width: 2px;
  paint-order: stroke;
}
.lbl-big text { font-size: 14px; fill: #333; }
.lbl-big text:first-child { font-size: 15px; }
.m4 { font-size: 9px; fill: #fff; text-anchor: middle; stroke: #e8608a; stroke-width: 1.5px; paint-order: stroke; }
.a503 rect { fill: #f6c8bc; stroke: #f0f0f0; }
.a503 text { font-size: 10px; fill: #555; text-anchor: middle; }
.pin { fill: #2a81cb; stroke: #2170b0; stroke-width: .6; }
.pin-dot { fill: #fff; }
.pin-shadow { fill: rgba(70, 60, 40, .55); filter: blur(2px); }
.zoomctl {
  position: absolute;
  left: 12px;
  top: 12px;
  width: 30px;
  display: flex;
  flex-direction: column;
  background: #fff;
  border-radius: 3px;
  box-shadow: 0 0 0 1px rgba(0, 0, 0, .2);
}
.zbtn {
  height: 31px;
  display: flex;
  align-items: center;
  justify-content: center;
  font-family: "Liberation Sans", Arial, sans-serif;
  font-weight: 700;
  font-size: 22px;
  color: #000;
}
.zbtn:first-child { border-bottom: 1px solid #ccc; }
.attrib {
  position: absolute;
  right: 0;
  bottom: 0;
  padding: 0 5px;
  background: rgba(255, 255, 255, .8);
  font-family: "Liberation Sans", Arial, sans-serif;
  font-size: 11px;
  line-height: 16px;
  color: #333;
}
.attrib a { color: #0078a8; }

/* table */
.forecast {
  margin: 25px auto 0;
  width: 640px;
  table-layout: fixed;
  border-collapse: collapse;
  font-family: Lato, sans-serif;
  color: #08162e;
}
.c1 { width: 180px; } .c2 { width: 78px; } .c3 { width: 84px; } .c4 { width: 66px; } .c5 { width: 132px; } .c6 { width: 100px; }
.forecast th { height: 26px; padding: 0; font-size: 17px; font-weight: 700; color: #02102a; text-align: center; white-space: nowrap; }
.forecast td { height: 110px; padding: 2px 0 0; font-size: 17.6px; text-align: center; white-space: nowrap; }
.forecast td .wicon { margin-bottom: 4px; }
.dt { display: inline-flex; align-items: center; }
.dt-date { letter-spacing: -.62px; }
.fa { width: 15px; height: 17px; flex: none; }
.fa-clock { width: 17px; }

/* scrollbar */
.scrollbar { flex: 0 0 15px; position: relative; background: #f1f1f1; display: flex; flex-direction: column; align-items: center; }
.sb-up, .sb-down { width: 0; height: 0; border-left: 4px solid transparent; border-right: 4px solid transparent; }
.sb-up { margin-top: 6px; border-bottom: 5px solid #505050; }
.sb-thumb { width: 11px; height: 143px; margin-top: 77px; background: #c1c1c1; }
.sb-down { margin-top: auto; margin-bottom: 3px; border-top: 5px solid #505050; }
.cursor { position: absolute; left: 1148px; top: 537px; width: 17px; height: 22px; }

/* taskbar */
.taskbar {
  flex: 0 0 49px;
  display: flex;
  align-items: center;
  padding-left: 3px;
  background: #383838;
  border-top: 1px solid #17304a;
}
.tb-mint { width: 44px; height: 44px; flex: none; }
.tb-app { width: 37px; height: 37px; flex: none; margin-left: 11px; }
.tb-first { margin-left: 8px; }
.tb-sep { width: 1px; height: 35px; margin-left: 8px; background: #8a8a8a; }
.tb-aftersep { margin-left: 9px; }
.tb-term { font-family: "DejaVu Sans Mono", monospace; font-size: 13px; font-weight: 700; fill: #eee; }
.tb-task {
  height: 48px;
  width: 200px;
  display: flex;
  align-items: center;
  gap: 10px;
  white-space: nowrap;
}
.tb-active { margin-left: 5px; padding-left: 4px; background: #35a853; color: #e4e4e4; font-size: 13px; }
.tb-other { padding-left: 4px; color: #d8d8d8; font-size: 13.7px; }
.tray { margin-left: auto; display: flex; align-items: center; }
.tray-stack { display: flex; flex-direction: column; align-items: center; margin-right: 6px; }
.tray-s { width: 24px; height: 20px; }
.tb-t { font-size: 10px; font-weight: 700; fill: #fff; text-anchor: middle; font-family: "Noto Sans", sans-serif; }
.tray-i { width: 38px; height: 38px; margin-right: 11px; }
.tray-bolt { margin-right: 7px; }
.tray-v { width: 42px; height: 38px; }
.clock { margin: 0 2px 0 4px; font-size: 12.5px; color: #d8d8d8; letter-spacing: .4px; }
```
